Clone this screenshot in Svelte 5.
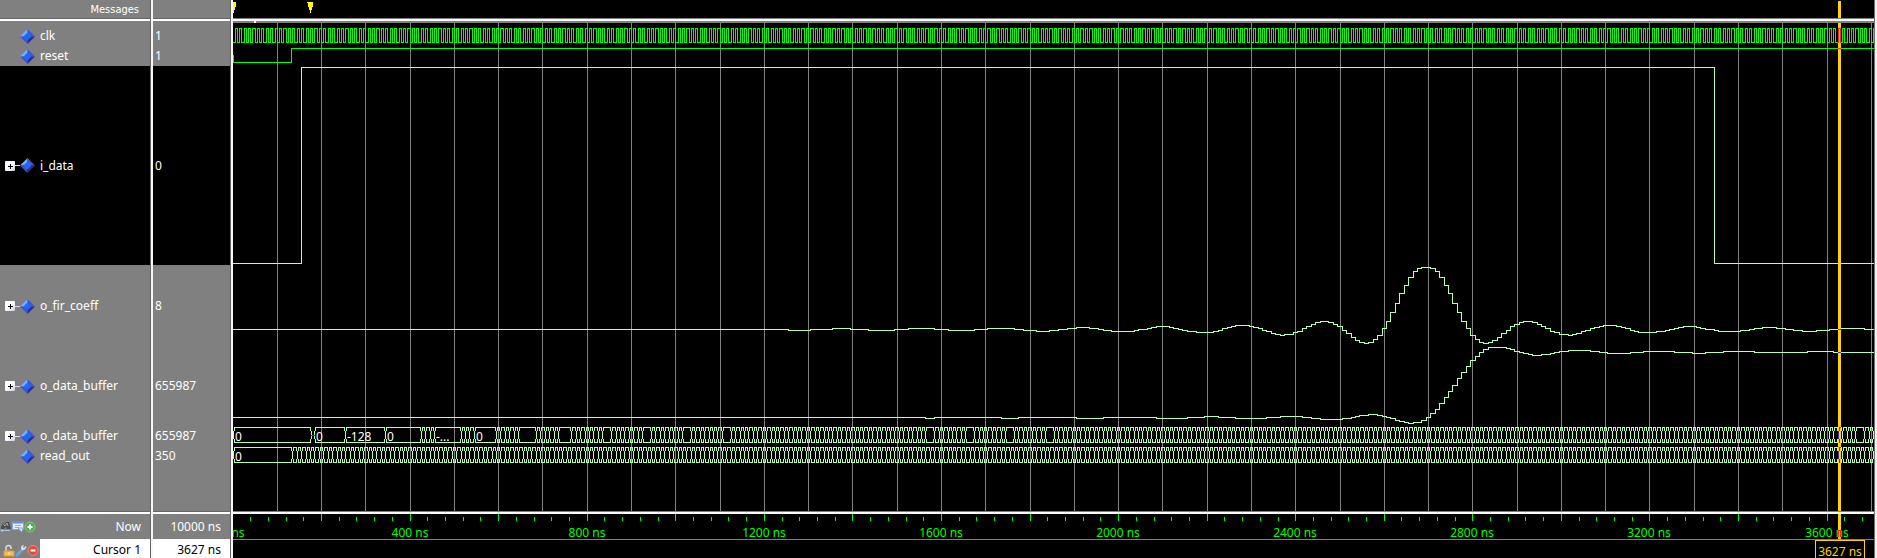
<script>
  const SCALE = 0.4428; // pixels per nanosecond
  const TOP = 21; // height of the header and its divider above the plot
  let width = $state(1641);

  const px = (t) => Math.floor(t * SCALE);
  const cursorTime = 3627;

  const signals = [
    { name: 'clk', value: '1', size: 'row' },
    { name: 'reset', value: '1', size: 'row' },
    { name: 'i_data', value: '0', size: 'huge', bus: true, dark: true },
    { name: 'o_fir_coeff', value: '8', size: 'tall', bus: true },
    { name: 'o_data_buffer', value: '655987', size: 'tall', bus: true },
    { name: 'o_data_buffer', value: '655987', size: 'row', bus: true },
    { name: 'read_out', value: '350', size: 'row' }
  ];

  // Run-length lists: [samples of 10 ns, y level]
  const coeffHalf = [
    [1, 267], [1, 268], [1, 271], [1, 277], [1, 285], [1, 293], [1, 303], [1, 312], [1, 321], [1, 328],
    [1, 335], [1, 339], [1, 342], [1, 343], [1, 342], [1, 340], [1, 337], [1, 333], [1, 330], [1, 326],
    [1, 324], [1, 322], [2, 321], [1, 322], [1, 324], [1, 326], [1, 328], [1, 331], [1, 332], [2, 334],
    [1, 335], [1, 334], [1, 333], [1, 331], [1, 330], [1, 328], [1, 327], [1, 326], [3, 325], [1, 326],
    [1, 327], [1, 328], [1, 330], [1, 331], [4, 332], [2, 331], [1, 330], [1, 329], [1, 328], [1, 327],
    [3, 326], [1, 327], [1, 328], [2, 329], [1, 330], [5, 331], [2, 330], [1, 329], [2, 328], [3, 327],
    [2, 328], [2, 329], [2, 330], [3, 331], [3, 330], [2, 329], [6, 328], [3, 329], [6, 330], [3, 329],
    [6, 328], [3, 329], [6, 330], [4, 329], [4, 328], [5, 329], [5, 330]
  ];
  const half = coeffHalf.reduce((n, [c]) => n + c, 0);
  const coeffStart = 2695 - half * 10;
  const coeffRuns = [...coeffHalf.slice().reverse(), ...coeffHalf];

  const bufferRuns = [
    [2, 418], [15, 417], [4, 418], [13, 417], [6, 418], [12, 417], [7, 418], [4, 417], [3, 416], [4, 417],
    [7, 418], [3, 417], [5, 416], [2, 417], [2, 418], [5, 419], [2, 418], [1, 417], [1, 416], [2, 415],
    [2, 414], [1, 415], [1, 416], [1, 417], [1, 418], [1, 420], [1, 421], [1, 422], [1, 423], [2, 422],
    [1, 420], [1, 417], [1, 413], [1, 409], [1, 403], [1, 397], [1, 391], [1, 385], [1, 378], [1, 372],
    [1, 366], [1, 360], [1, 356], [1, 352], [1, 349], [4, 347], [1, 348], [1, 349], [1, 351], [1, 352],
    [1, 353], [1, 354], [2, 355], [2, 354], [1, 353], [1, 352], [2, 351], [5, 350], [2, 351], [2, 352],
    [5, 353], [3, 352], [7, 351], [4, 352], [3, 353], [4, 352], [7, 351], [12, 352], [6, 351], [1, 352]
  ];

  function stepPath(base, start, runs) {
    let t = start;
    let d = `M0 ${base - TOP + 0.5}`;
    for (const [n, y] of runs) {
      d += `H${px(t) + 0.5}V${y - TOP + 0.5}`;
      t += n * 10;
    }
    return `${d}H8000`;
  }

  const coeffPath = stepPath(329, coeffStart, coeffRuns);
  const bufferPath = stepPath(417, 1565, bufferRuns);
  const iPath = `M0 242.5H${px(155) + 0.5}V46.5H${px(3345) + 0.5}V242.5H8000`;
  const resetPath = `M0.5 34V41.5H${px(130) + 1.5}V27.5H8000`;

  const endTime = $derived(width / SCALE + 20);

  const clkPath = $derived.by(() => {
    let d = 'M0 21.5';
    for (let t = 5; t < endTime; t += 10) {
      d += `H${px(t) + 0.5}V7.5H${px(t + 5) + 0.5}V21.5`;
    }
    return d;
  });

  // A bus trace: two rails with a narrow crossing centred on each change of value
  function busPath(y, edges, start = 2) {
    let d = '';
    let from = start;
    const a = y + 0.5;
    const b = y + 15.5;
    for (const e of edges) {
      const m = e + 0.5;
      d += `M${from} ${a}H${e}M${from} ${b}H${e}`;
      d += `M${m - 1} ${y}v4M${m - 1} ${y + 12}v4M${m} ${y + 4}v8M${m + 1} ${y}v4M${m + 1} ${y + 12}v4`;
      from = e + 1;
    }
    return `${d}M${from} ${a}H8000M${from} ${b}H8000`;
  }
  const opening = (y) =>
    `M1 ${y + 0.5}h2M1 ${y + 15.5}h2M1.5 ${y}v4M1.5 ${y + 12}v4M0.5 ${y + 4}v8`;

  const missing = new Set([
    655, 665, 675, 745, 755, 845, 935, 1025, 1115, 1575, 1665, 1755, 1845, 3675
  ]);
  const bufEdges = $derived.by(() => {
    const list = [255, 345, 425, 435, 445, 455, 515, 525, 535, 545];
    for (let t = 595; t < endTime; t += 10) if (!missing.has(t)) list.push(t);
    return list.map(px);
  });
  const readEdges = $derived.by(() => {
    const list = [];
    for (let t = 135; t < endTime; t += 10) list.push(px(t));
    return list;
  });

  const u = px(175);
  const bufBus = $derived(
    `${opening(406)}M1 406.5H${u + 1}M1 421.5H${u + 1}M${u + 0.5} 406v4M${u + 0.5} 418v4M${u + 1.5} 410v8` +
      `M${u + 5.5} 406v4M${u + 5.5} 418v4M${u + 4.5} 410v8` +
      busPath(406, bufEdges, u + 5)
  );
  const readBus = $derived(opening(426) + busPath(426, readEdges));

  const every = (step, from, limit) => {
    const list = [];
    for (let t = from; t * SCALE < limit; t += step) list.push(t);
    return list;
  };
  const gridTimes = $derived(every(100, 100, width));
  const tickTimes = $derived(every(40, 40, width));
  const labelTimes = $derived(every(400, 0, width - 25));
  const cx = px(cursorTime) - 1;
  const values = [
    [2, 420, '0'], [83, 420, '0'], [114, 420, '-128'], [154, 420, '0'],
    [203, 420, '-...'], [243, 420, '0'], [2, 440, '0']
  ];
</script>

{#snippet diamond()}
  <svg class="diamond" width="15" height="15" viewBox="0 0 15 15" aria-hidden="true">
    <path d="M7.5 0 0 7.5h7.5z" fill="#78acff" />
    <path d="M7.5 0 15 7.5H7.5z" fill="#3c58cc" />
    <path d="M0 7.5 7.5 15V7.5z" fill="#3c56c8" />
    <path d="M15 7.5 7.5 15V7.5z" fill="#2b2b9c" />
    <path d="M7.5 3.5 11.5 7.5 7.5 11.5 3.5 7.5z" fill="#1f66fa" />
  </svg>
{/snippet}

<main class="viewer">
  <section class="names">
    <header>Messages</header>
    <div class="split"></div>
    <div class="rows">
      {#each signals as s}
        <div class="signal {s.size}" class:dark={s.dark}>
          {#if s.bus}
            <button class="expand" aria-label="Expand {s.name}">
              <svg width="10" height="10" viewBox="0 0 10 10"><path d="M3 5.5h5M5.5 3v5" stroke="#000" fill="none" shape-rendering="crispEdges" /></svg>
            </button>
            <span class="link"></span>
          {:else}
            <span class="blank"></span>
          {/if}
          {@render diamond()}
          <span class="label">{s.name}</span>
        </div>
      {/each}
    </div>
    <div class="split"></div>
    <div class="foot now">
      <span class="tools">
        <button aria-label="Find signal">
          <svg width="12" height="12" viewBox="0 0 12 12">
            <path d="M1 6 3 2l2 1 1-2h3l2 7H7L5.500 6 4 8H1z" fill="#4c4c4c" /><path d="M3.500 3 5 5l2-3 1 3" stroke="#aaa" fill="none" />
            <path d="M1 9.500h9M2.500 8 1 9.500 2.500 11" stroke="#a9c9e8" fill="none" />
          </svg>
        </button>
        <button aria-label="Edit grid">
          <svg width="12" height="12" viewBox="0 0 12 12">
            <path d="M.5 1h11v7.500h-11z" fill="#e4efff" stroke="#79a8e8" /><path d="M1 1.500h10" stroke="#5790e4" stroke-width="2" />
            <path d="M3 4.500h6M3 6.500h4" stroke="#93afd0" /><path d="m6 7 4 4.500 1-4.500z" fill="#dbe9f8" stroke="#668bb5" stroke-width=".6" />
          </svg>
        </button>
        <button aria-label="Add cursor">
          <svg width="12" height="12" viewBox="0 0 12 12"><circle cx="6" cy="6" r="5" fill="#4fae49" stroke="#86c97c" /><path d="M6 3.500v5M3.500 6h5" stroke="#fff" stroke-width="2" /></svg>
        </button>
      </span>
      <span>Now</span>
    </div>
    <div class="foot cursor">
      <span class="tools">
        <button aria-label="Lock cursor">
          <svg width="12" height="14" viewBox="0 0 12 14"><path d="M3 7V4a2.500 2.500 0 0 1 5 0v1" fill="none" stroke="#d9d9d9" stroke-width="1.500" /><path d="M1 7h10v5H1z" fill="#f3bd55" stroke="#dc9c34" /><path d="M6 8v3" stroke="#fff0b0" /></svg>
        </button>
        <button aria-label="Cursor properties">
          <svg width="12" height="14" viewBox="0 0 12 14"><path d="m2 11 5-5" stroke="#6f9fe0" stroke-width="3" stroke-linecap="round" /><path d="M10.500 2 9 4 8 3l1-2C6 1 5.500 4 6.500 5.500S11 6 11.500 3z" fill="#d5e0ee" /></svg>
        </button>
        <button aria-label="Delete cursor">
          <svg width="12" height="14" viewBox="0 0 12 14"><circle cx="6" cy="6.500" r="5" fill="#e04b3e" stroke="#f08b80" /><path d="M3.500 6.500h5" stroke="#fff" stroke-width="2" /></svg>
        </button>
      </span>
      <span class="white">Cursor 1</span>
    </div>
  </section>
  <div class="divider"></div>

  <section class="values">
    <header></header>
    <div class="split"></div>
    <div class="rows">
      {#each signals as s}
        <div class="signal {s.size}" class:dark={s.dark}>{s.value}</div>
      {/each}
    </div>
    <div class="split"></div>
    <div class="foot now">10000 ns</div>
    <div class="foot cursor"><span class="white">3627 ns</span></div>
  </section>
  <div class="divider"></div>

  <section class="waves" bind:clientWidth={width}>
    <svg class="top" height="18">
      <path d="M0 2h3v5H2v3H1v3H0z" fill="#ff0" />
      <path d="M{u - 3} 2h6v5h-1v3h-1v3h-1v-3h-1v-3h-1v-4h-1z" fill="#ff0" />
      <rect x={cx} y="1" width="3" height="17" fill="#ffd200" />
    </svg>
    <div class="split"></div>
    <svg class="plot" height="490">
      <rect class="shade" width="100%" height="2" />
      <rect x="21" y="0" width="2" height="2" fill="#fff" />
      {#each gridTimes as t}
        <rect class="shade" x={px(t)} y="2" width="1" height="488" />
      {/each}
      <g class="trace">
        <path class="bit" d={clkPath} />
        <path class="bit" d={resetPath} />
        <path d={iPath} />
        <path d={coeffPath} />
        <path d={bufferPath} />
        <path d={bufBus} />
        <path d={readBus} />
        <path class="unknown" d="M{u + 1} 414.5h4" />
      </g>
      {#each values as [x, y, text]}
        <text {x} {y} fill="#fff">{text}</text>
      {/each}
      <rect x={cx} y="2" width="3" height="488" fill="#ffd200" />
      <path d="M{cx} 7.5h3M{cx + 0.5} 7v15M{cx + 2.5} 7v15M{cx} 27.5h3" stroke="#ff2d00" fill="none" />
      <path
        d="M{cx} 308.5h3M{cx} 331.5h3M{cx + 1} 406.5h2M{cx + 1.5} 406v4M{cx + 0.5} 410v8M{cx + 1.5} 418v4M{cx + 1} 426.5h2M{cx + 1.5} 426v4M{cx + 0.5} 430v8M{cx + 1.5} 438v4"
        stroke="#4b2dc0"
        fill="none"
      />
    </svg>
    <div class="split"></div>
    <svg class="ruler" height="44">
      {#each tickTimes as t}
        <rect x={px(t)} y={t % 200 ? 3 : 0} width="1" height={t % 200 ? 4 : 7} fill="#0f0" />
      {/each}
      {#each labelTimes as t}
        <text x={px(t)} y="23" text-anchor="middle" fill="#0f0">{t} ns</text>
      {/each}
      <rect class="shade" y="25" width="100%" height="1" />
      <rect x={cx} width="3" height="25" fill="#ffd200" />
      <path d="M{cx + 0.5} 16v7M{cx + 2.5} 16v7M{cx} 16.5h3" stroke="#ff2d00" fill="none" />
      <rect x={cx - 22.5} y="26.5" width="49" height="24" fill="#000" stroke="#ffd200" />
      <text x={cx + 2} y="42" text-anchor="middle" fill="#ffd200">{cursorTime} ns</text>
    </svg>
  </section>
  <div class="edge"></div>
</main>

<style>
  :global(body) {
    margin: 0;
    background: #000;
  }
  .viewer {
    display: grid;
    grid-template-columns: 150px 3px 77px 3px minmax(0, 1fr) 3px;
    overflow: hidden;
    font: 12px/20px 'Noto Sans', sans-serif;
    color: #fff;
    background: #808080;
  }
  section {
    display: flex;
    flex-direction: column;
    min-width: 0;
  }
  header {
    height: 18px;
    padding-right: 11px;
    font: 11px/19px 'DejaVu Sans Condensed', 'Noto Sans', sans-serif;
    text-align: right;
  }
  .split {
    height: 2px;
    border-top: 1px solid #666;
    background: #fff;
  }
  .divider {
    border-left: 1px solid #666;
    background: #f8f8f8;
  }
  .rows {
    height: 485px;
    padding-top: 5px;
  }
  .signal {
    display: flex;
    align-items: center;
    height: 20px;
  }
  .signal.tall {
    height: 80px;
  }
  .signal.huge {
    height: 199px;
    margin-bottom: 1px;
  }
  .dark {
    background: #000;
  }
  .values .signal {
    padding-left: 2px;
  }
  button {
    display: block;
    padding: 0;
    border: 0;
    background: none;
  }
  button svg {
    display: block;
  }
  .expand {
    margin-left: 5px;
    border-radius: 1px;
    background: linear-gradient(135deg, #fff 50%, #c4ccdc);
  }
  .link {
    width: 5px;
    height: 1px;
    background: #ddd;
  }
  .blank {
    width: 20px;
  }
  .label {
    margin-left: 5px;
  }
  .foot {
    display: flex;
    justify-content: space-between;
    align-items: center;
  }
  .now {
    height: 25px;
    padding-right: 9px;
  }
  .cursor {
    height: 19px;
    align-items: stretch;
    overflow: hidden;
  }
  .tools {
    display: flex;
    width: 40px;
  }
  .cursor .tools {
    width: 37px;
    padding: 4px 0 0 3px;
  }
  .white {
    flex: 1;
    padding-right: 9px;
    line-height: 21px;
    text-align: right;
    color: #000;
    background: #fff;
  }
  .values .now {
    justify-content: flex-end;
  }
  .waves {
    background: #000;
  }
  .waves > svg {
    display: block;
    width: 100%;
  }
  .waves .split {
    border-color: #808080;
  }
  .shade {
    fill: #808080;
  }
  .trace {
    fill: none;
    stroke: #b4ffb4;
    shape-rendering: crispEdges;
  }
  .bit {
    stroke: #0f0;
  }
  .unknown {
    stroke: #f00;
  }
  .edge {
    border-left: 1px solid #707070;
    background: #f0f0f0;
  }
</style>
